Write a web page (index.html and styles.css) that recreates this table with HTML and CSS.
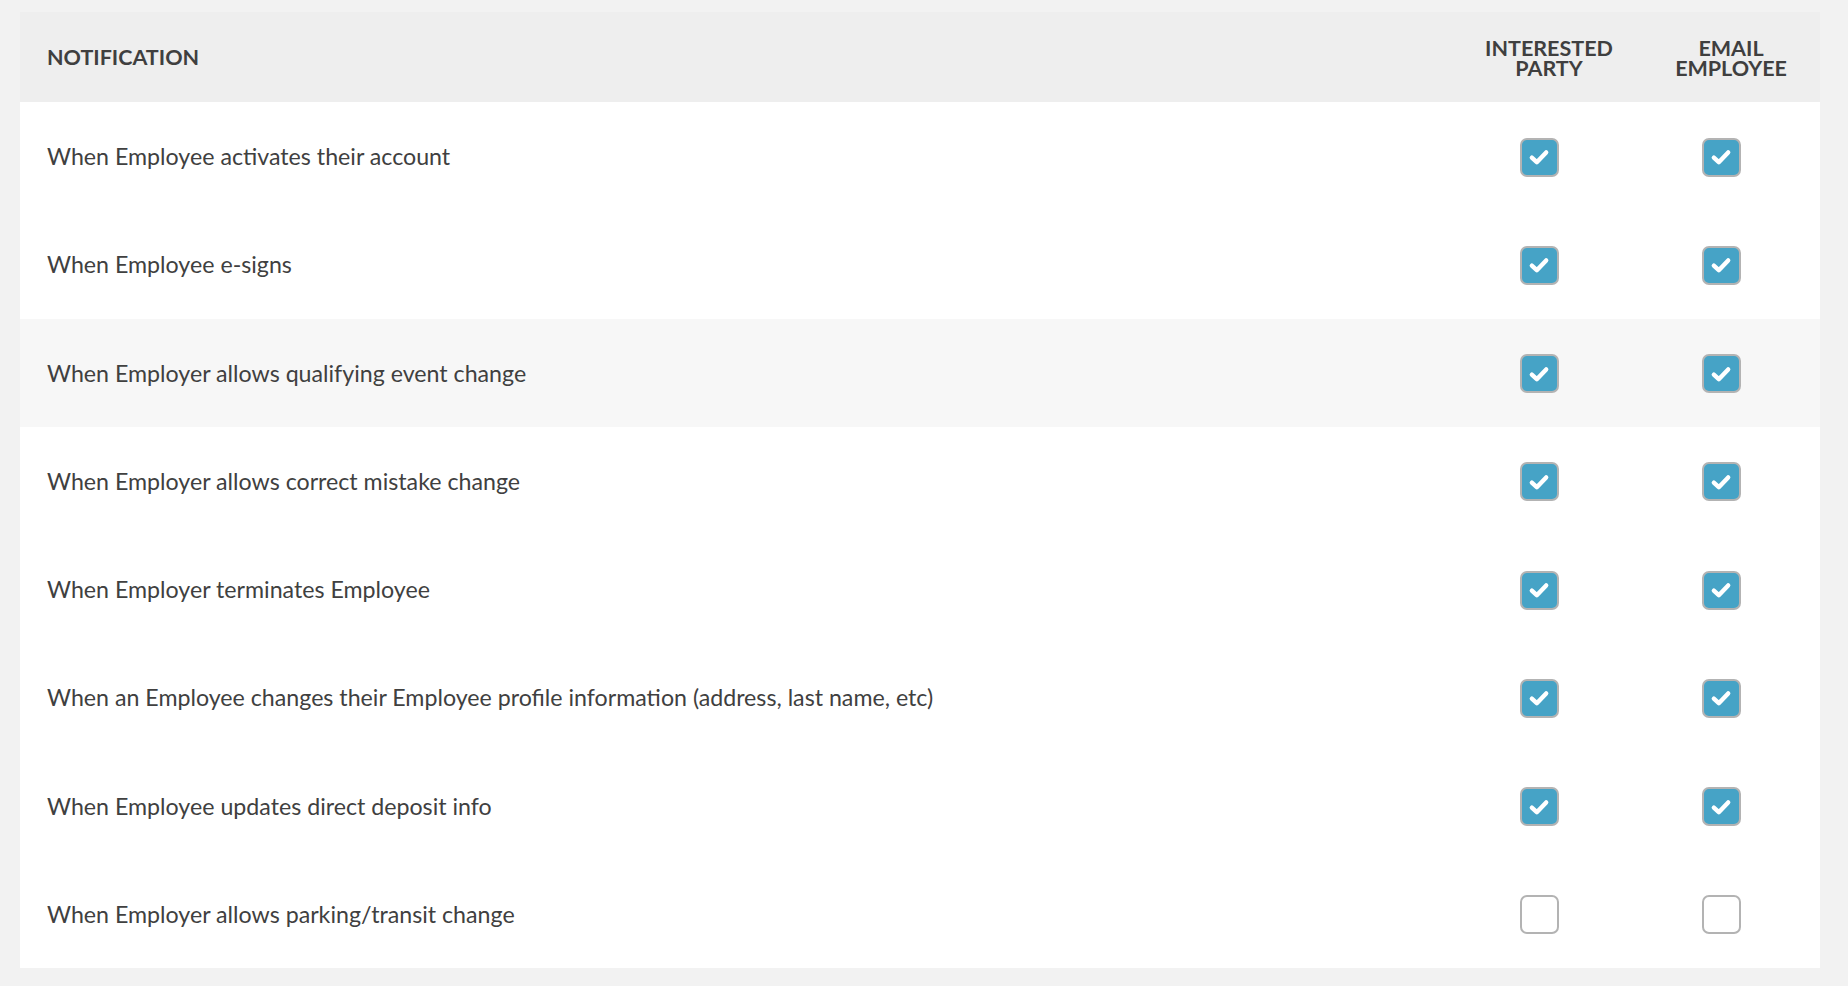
FILE: index.html
```html
<!DOCTYPE html>
<html lang="en">
<head>
<meta charset="utf-8">
<title>Notifications</title>
<link rel="stylesheet" href="styles.css">
</head>
<body>
<div class="table">
  <div class="row head">
    <div class="label">NOTIFICATION</div>
    <div class="col">INTERESTED<br>PARTY</div>
    <div class="col">EMAIL<br>EMPLOYEE</div>
  </div>
  <div class="row">
    <div class="label">When Employee activates their account</div>
    <div class="col"><span class="cb on"><svg viewBox="0 0 20 20"><path d="M4.5 10.5 L8.3 14 L15.5 6.5"/></svg></span></div>
    <div class="col"><span class="cb on"><svg viewBox="0 0 20 20"><path d="M4.5 10.5 L8.3 14 L15.5 6.5"/></svg></span></div>
  </div>
  <div class="row">
    <div class="label">When Employee e-signs</div>
    <div class="col"><span class="cb on"><svg viewBox="0 0 20 20"><path d="M4.5 10.5 L8.3 14 L15.5 6.5"/></svg></span></div>
    <div class="col"><span class="cb on"><svg viewBox="0 0 20 20"><path d="M4.5 10.5 L8.3 14 L15.5 6.5"/></svg></span></div>
  </div>
  <div class="row alt">
    <div class="label">When Employer allows qualifying event change</div>
    <div class="col"><span class="cb on"><svg viewBox="0 0 20 20"><path d="M4.5 10.5 L8.3 14 L15.5 6.5"/></svg></span></div>
    <div class="col"><span class="cb on"><svg viewBox="0 0 20 20"><path d="M4.5 10.5 L8.3 14 L15.5 6.5"/></svg></span></div>
  </div>
  <div class="row">
    <div class="label">When Employer allows correct mistake change</div>
    <div class="col"><span class="cb on"><svg viewBox="0 0 20 20"><path d="M4.5 10.5 L8.3 14 L15.5 6.5"/></svg></span></div>
    <div class="col"><span class="cb on"><svg viewBox="0 0 20 20"><path d="M4.5 10.5 L8.3 14 L15.5 6.5"/></svg></span></div>
  </div>
  <div class="row">
    <div class="label">When Employer terminates Employee</div>
    <div class="col"><span class="cb on"><svg viewBox="0 0 20 20"><path d="M4.5 10.5 L8.3 14 L15.5 6.5"/></svg></span></div>
    <div class="col"><span class="cb on"><svg viewBox="0 0 20 20"><path d="M4.5 10.5 L8.3 14 L15.5 6.5"/></svg></span></div>
  </div>
  <div class="row">
    <div class="label">When an Employee changes their Employee profile information (address, last name, etc)</div>
    <div class="col"><span class="cb on"><svg viewBox="0 0 20 20"><path d="M4.5 10.5 L8.3 14 L15.5 6.5"/></svg></span></div>
    <div class="col"><span class="cb on"><svg viewBox="0 0 20 20"><path d="M4.5 10.5 L8.3 14 L15.5 6.5"/></svg></span></div>
  </div>
  <div class="row">
    <div class="label">When Employee updates direct deposit info</div>
    <div class="col"><span class="cb on"><svg viewBox="0 0 20 20"><path d="M4.5 10.5 L8.3 14 L15.5 6.5"/></svg></span></div>
    <div class="col"><span class="cb on"><svg viewBox="0 0 20 20"><path d="M4.5 10.5 L8.3 14 L15.5 6.5"/></svg></span></div>
  </div>
  <div class="row">
    <div class="label">When Employer allows parking/transit change</div>
    <div class="col"><span class="cb"></span></div>
    <div class="col"><span class="cb"></span></div>
  </div>
</div>
</body>
</html>
```

FILE: styles.css
```css
html, body {
  margin: 0;
  padding: 0;
  background: #f2f2f2;
}
body {
  padding: 12px 28px 18px 20px;
  font-family: Lato, "Open Sans", sans-serif;
  color: #404040;
}
.table {
  background: #ffffff;
  width: 1800px;
}
.row {
  display: flex;
  align-items: center;
  height: 108.25px;
}
.row.head {
  height: 90px;
  background: #eeeeee;
  font-weight: bold;
  color: #3f3f3f;
}
.row.alt {
  background: #f7f7f7;
}
.label {
  flex: 1;
  padding-left: 27px;
  font-size: 23.2px;
}
.head .label {
  font-size: 21.5px;
}
.col {
  width: 182px;
  text-align: center;
  font-size: 21.5px;
  line-height: 20px;
  display: flex;
  justify-content: center;
}
.head .col {
  display: block;
  box-sizing: border-box;
  padding-top: 2px;
  padding-left: 4px;
}
.cb {
  box-sizing: border-box;
  width: 39px;
  height: 39px;
  border: 2px solid #b3b3b3;
  border-radius: 7px;
  background: #ffffff;
  margin-right: 16px;
  margin-top: 2px;
  display: flex;
  align-items: center;
  justify-content: center;
}
.cb.on {
  background: #46a3c6;
}
.cb svg {
  width: 26px;
  height: 26px;
  fill: none;
  stroke: #ffffff;
  stroke-width: 3.4;
  stroke-linecap: round;
  stroke-linejoin: round;
}
```
